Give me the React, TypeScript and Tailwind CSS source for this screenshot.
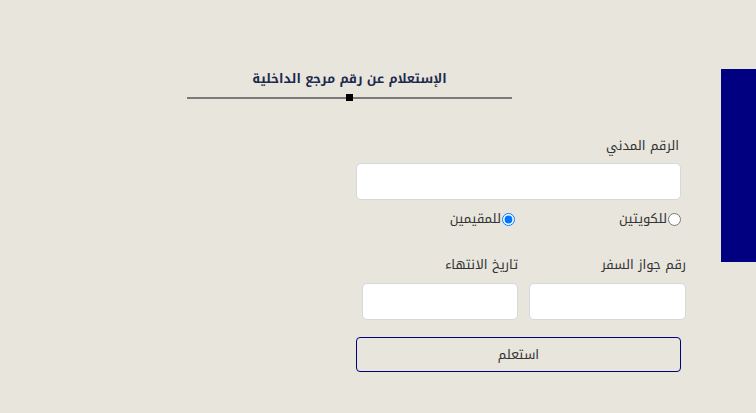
const App = () => {
  return (
    <div dir="ltr" className="min-h-[413px] w-full bg-[#e8e5dd] flex font-['Noto_Kufi_Arabic','DejaVu_Sans',sans-serif]">
      <div className="flex-1 flex flex-col">
        {/* Title */}
        <div className="ml-[187px] mt-[69px] w-[325px] flex flex-col items-center">
          <h1 dir="rtl" className="text-[12.7px] font-bold text-[#1c2a4d] leading-[20px]">
            الإستعلام عن رقم مرجع الداخلية
          </h1>
          <div className="relative w-full mt-[8px] h-[2px] bg-[#7b7b7b]">
            <div className="absolute left-[159px] top-[-3px] w-[7px] h-[7px] bg-black"></div>
          </div>
        </div>

        {/* Form */}
        <div dir="rtl" className="ml-[356px] w-[330px] mt-[37px] flex flex-col text-[#333] text-[13px]">
          <div className="pr-[5px] flex flex-col">
            <label className="leading-[20px] mr-[2px]">الرقم المدني</label>
            <input
              className="mt-[7px] h-[37px] w-[325px] bg-white border border-[#d5d8dc] rounded-[5px]"
              type="text"
            />
          </div>
          <div className="mt-[9px] flex pr-[5px] leading-[20px]">
            <label className="w-[166px] flex items-center gap-[1px]">
              <input type="radio" name="t" className="w-[13px] h-[13px] m-0" />
              للكويتين
            </label>
            <label className="flex items-center gap-[1px]">
              <input type="radio" name="t" defaultChecked className="w-[13px] h-[13px] m-0" />
              للمقيمين
            </label>
          </div>

          <div className="mt-[26px] flex gap-[11px]">
            <div className="w-[157px] flex flex-col">
              <label className="leading-[20px]">رقم جواز السفر</label>
              <input
                className="mt-[8px] h-[37px] w-full bg-white border border-[#d5d8dc] rounded-[5px]"
                type="text"
              />
            </div>
            <div className="w-[156px] flex flex-col">
              <label className="leading-[20px]">تاريخ الانتهاء</label>
              <input
                className="mt-[8px] h-[37px] w-full bg-white border border-[#d5d8dc] rounded-[5px]"
                type="text"
              />
            </div>
          </div>

          <div className="pr-[5px]">
            <button className="mt-[17px] h-[35px] w-[325px] border border-[#000080] rounded-[4px] text-[13px] text-[#333] bg-transparent leading-[20px]">
              استعلم
            </button>
          </div>
        </div>
      </div>

      <div className="mt-[69px] w-[35px] h-[193px] bg-[#000080] shrink-0"></div>
    </div>
  );
};

export default App;
